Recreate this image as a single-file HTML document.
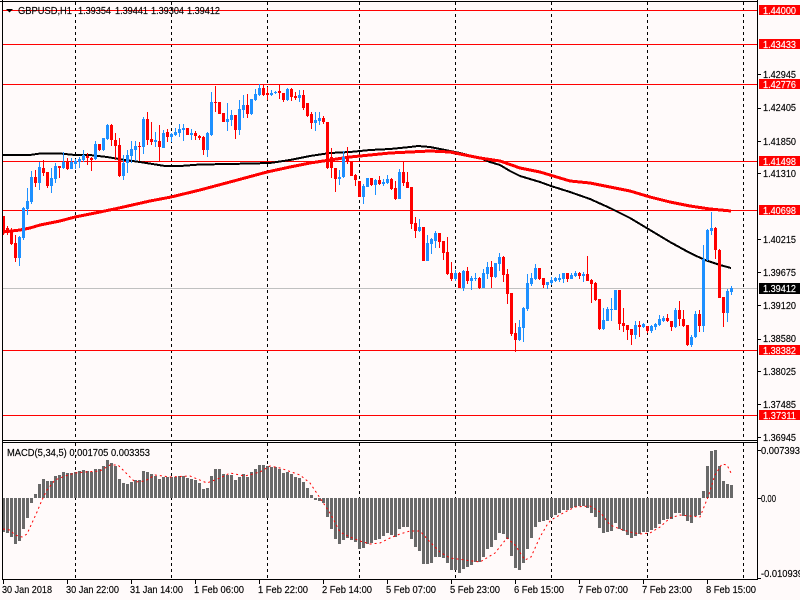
<!DOCTYPE html>
<html>
<head>
<meta charset="utf-8">
<title>GBPUSD,H1</title>
<style>
html,body{margin:0;padding:0;width:800px;height:600px;overflow:hidden;background:#fffafa}
svg{display:block}
text{font-family:"Liberation Sans",sans-serif;font-size:10.5px;fill:#000;stroke:#000;stroke-width:.15px}
</style>
</head>
<body>
<svg width="800" height="600" viewBox="0 0 800 600" xmlns="http://www.w3.org/2000/svg">
<rect width="800" height="600" fill="#fffafa"/>
<g shape-rendering="crispEdges">
<!-- grid -->
<path d="M75.5 2V439M171.5 2V439M267.5 2V439M359.5 2V439M455.5 2V439M551.5 2V439M647.5 2V439M743.5 2V439M75.5 443V579M171.5 443V579M267.5 443V579M359.5 443V579M455.5 443V579M551.5 443V579M647.5 443V579M743.5 443V579" stroke="#000" stroke-width="1" stroke-dasharray="3 3" fill="none"/>
<!-- price level lines -->
<path d="M3 288.5H757" stroke="#c0c0c0" fill="none"/>
<path d="M3 10.5H757M3 44.5H757M3 84.5H757M3 161.5H757M3 210.5H757M3 350.5H757M3 415.5H757" stroke="#ff0000" fill="none"/>
<!-- moving averages -->
<path d="M3 155L30 155L40 153.5L60 153.5L75 155L90 155L107 157L125 160L140 162L165 166L180 166L200 164.5L230 164L250 163.5L270 163L290 160L310 156L330 153L350 152L370 150L390 149L410 147L418 146L430 147L450 151L460 153L480 158L490 162L500 165L510 171L520 176L530 179L540 182L551 186L570 192L590 199L610 208L630 218L650 230L670 242L690 253L705 260L720 265L731 268" stroke="#000" stroke-width="2" fill="none"/>
<path d="M3 232L20 230L30 228L40 225L60 221L75 217L85 215L100 212L119 208L130 205.5L150 201L171 197L200 190L230 182L267 172L290 167L310 163L330 160L350 157L370 155L390 153L410 152L430 151L450 152L460 154L480 158L500 161L520 168L540 172L570 181L590 183L610 187L630 191L650 197L670 202L690 206L710 209L731 211" stroke="#ff0000" stroke-width="3" fill="none"/>
</g>
<g shape-rendering="crispEdges" fill="none">
<!-- blue wicks -->
<path stroke="#1e90ff" stroke-width="1" d="M19.5 236V266M23.5 207V240M27.5 188V215M31.5 171V204M39.5 162V190M51.5 168V193M55.5 163V183M63.5 152V169M71.5 158V169M75.5 159V169M79.5 157V168M83.5 150V162M95.5 141V160M103.5 138V151M107.5 124V140M123.5 155V180M127.5 150V173M131.5 141V163M135.5 141V161M143.5 117V154M155.5 132V147M163.5 130V148M171.5 133V142M175.5 128V136M179.5 124V137M183.5 124V141M191.5 129V140M207.5 132V157M211.5 92V136M227.5 103V131M231.5 110V126M239.5 100V135M243.5 95V118M251.5 99V115M255.5 89V101M259.5 84V96M271.5 90V96M275.5 91V94M287.5 88V101M299.5 90V102M315.5 112V131M319.5 112V125M339.5 170V185M343.5 151V178M363.5 184V204M367.5 178V187M375.5 179V195M383.5 179V186M387.5 175V184M399.5 169V199M419.5 219V232M427.5 235V261M431.5 238V254M435.5 231V248M455.5 270V281M463.5 270V291M471.5 276V290M475.5 273V281M483.5 269V288M487.5 262V279M495.5 263V278M499.5 253V271M519.5 320V341M523.5 307V342M527.5 274V311M531.5 273V286M535.5 264V280M547.5 282V289M551.5 277V285M555.5 277V282M559.5 274V282M563.5 273V283M571.5 273V279M575.5 271V277M583.5 272V282M603.5 308V330M607.5 307V321M611.5 298V321M615.5 290V310M635.5 321V339M643.5 323V328M651.5 325V333M655.5 323V330M659.5 315V326M663.5 316V322M675.5 308V328M691.5 335V347M695.5 311V338M703.5 245V332M707.5 229V261M711.5 212V235M727.5 289V322M731.5 286V295"/>
<!-- blue bodies -->
<path stroke="#1e90ff" stroke-width="3" d="M19.5 237V258M23.5 208V238M27.5 201V209M31.5 177V202M39.5 167V183M51.5 178V186M55.5 166V179M63.5 162V168M71.5 162V169M75.5 161V164M79.5 159V162M83.5 155V160M95.5 144V159M103.5 138V150M107.5 125V139M123.5 163V176M127.5 155V163M131.5 149V156M135.5 146V150M143.5 119V147M155.5 140V142M163.5 133V148M171.5 134V137M175.5 132V135M179.5 129V133M183.5 128V130M191.5 133V135M207.5 133V150M211.5 102V135M227.5 119V122M231.5 115V120M239.5 109V130M243.5 105V110M251.5 99V114M255.5 94V100M259.5 88V95M271.5 93V95M275.5 92V93M287.5 89V100M299.5 95V98M315.5 120V123M319.5 118V121M339.5 177V179M343.5 157V177M363.5 186V197M367.5 178V187M375.5 180V185M383.5 182V184M387.5 179V183M399.5 172V199M419.5 227V231M427.5 243V261M431.5 239V244M435.5 233V241M455.5 273V279M463.5 271V288M471.5 278V281M475.5 278V279M483.5 273V288M487.5 267V274M495.5 263V277M499.5 257V264M519.5 327V340M523.5 308V328M527.5 283V309M531.5 278V284M535.5 268V279M547.5 282V285M551.5 280V283M555.5 278V281M559.5 278V280M563.5 273V279M571.5 275V279M575.5 273V276M583.5 274V276M603.5 320V329M607.5 309V321M611.5 309V310M615.5 290V310M635.5 325V335M643.5 324V327M651.5 326V331M655.5 324V327M659.5 319V325M663.5 318V321M675.5 310V327M691.5 337V345M695.5 314V337M703.5 259V326M707.5 230V260M711.5 228V231M727.5 291V313M731.5 288V292"/>
<!-- red wicks -->
<path stroke="#ff0000" stroke-width="1" d="M3.5 216V235M7.5 226V235M11.5 228V245M15.5 235V262M35.5 170V187M43.5 160V176M47.5 172V188M59.5 166V178M67.5 158V170M87.5 153V165M91.5 157V171M99.5 144V151M111.5 124V146M115.5 133V160M119.5 138V177M139.5 142V161M147.5 112V145M151.5 122V145M159.5 125V162M167.5 129V142M187.5 128V135M195.5 131V140M199.5 135V140M203.5 136V155M215.5 86V112M219.5 102V114M223.5 113V122M235.5 115V139M247.5 94V118M263.5 84V96M267.5 87V100M279.5 85V99M283.5 93V102M291.5 88V101M295.5 92V100M303.5 90V110M307.5 103V117M311.5 112V129M323.5 116V124M327.5 122V169M331.5 148V178M335.5 168V192M347.5 147V164M351.5 162V176M355.5 174V186M359.5 181V197M371.5 178V186M379.5 176V185M391.5 178V190M395.5 181V200M403.5 162V186M407.5 172V188M411.5 187V229M415.5 217V238M423.5 227V261M439.5 233V248M443.5 241V260M447.5 237V275M451.5 262V281M459.5 272V288M467.5 267V284M479.5 277V289M491.5 261V288M503.5 256V282M507.5 269V304M511.5 293V336M515.5 323V352M539.5 268V280M543.5 278V288M567.5 273V282M579.5 272V279M587.5 256V281M591.5 279V303M595.5 282V301M599.5 299V330M619.5 290V330M623.5 308V332M627.5 325V340M631.5 329V345M639.5 321V337M647.5 326V333M667.5 314V322M671.5 321V331M679.5 301V326M683.5 310V327M687.5 325V346M699.5 310V332M715.5 227V259M719.5 249V298M723.5 297V327"/>
<!-- red bodies -->
<path stroke="#ff0000" stroke-width="3" d="M3.5 216V233M7.5 228V233M11.5 230V244M15.5 243V258M35.5 177V183M43.5 168V173M47.5 172V186M59.5 166V168M67.5 162V169M87.5 156V158M91.5 158V160M99.5 144V150M111.5 125V140M115.5 140V146M119.5 145V176M139.5 146V147M147.5 119V140M151.5 139V142M159.5 141V147M167.5 132V137M187.5 128V135M195.5 133V136M199.5 136V138M203.5 137V150M215.5 102V103M219.5 102V114M223.5 113V122M235.5 115V130M247.5 105V114M263.5 88V95M267.5 93V95M279.5 91V93M283.5 93V100M291.5 89V97M295.5 96V98M303.5 95V108M307.5 103V116M311.5 114V123M323.5 118V122M327.5 122V168M331.5 157V168M335.5 168V179M347.5 156V162M351.5 162V176M355.5 175V180M359.5 181V197M371.5 178V185M379.5 180V184M391.5 179V189M395.5 188V199M403.5 172V183M407.5 182V188M411.5 187V224M415.5 223V231M423.5 227V261M439.5 233V242M443.5 241V253M447.5 252V274M451.5 273V279M459.5 273V288M467.5 271V281M479.5 278V288M491.5 267V277M503.5 257V275M507.5 274V294M511.5 293V334M515.5 333V340M539.5 268V279M543.5 278V285M567.5 273V279M579.5 273V276M587.5 274V281M591.5 280V284M595.5 283V300M599.5 299V329M619.5 290V324M623.5 323V326M627.5 325V330M631.5 329V335M639.5 325V327M647.5 326V331M667.5 318V321M671.5 321V327M679.5 310V319M683.5 319V326M687.5 325V345M699.5 314V326M715.5 228V250M719.5 250V298M723.5 297V313"/>
<!-- MACD histogram -->
<path stroke="#696969" stroke-width="3" d="M3.5 498V532M7.5 498V533M11.5 498V537M15.5 498V544M19.5 498V541M23.5 498V529M27.5 498V518M31.5 498V503M35.5 498V494M39.5 498V484M43.5 498V479M47.5 498V481M51.5 498V481M55.5 498V476M59.5 498V475M63.5 498V472M67.5 498V473M71.5 498V473M75.5 498V472M79.5 498V471M83.5 498V470M87.5 498V471M91.5 498V472M95.5 498V469M99.5 498V469M103.5 498V466M107.5 498V460M111.5 498V463M115.5 498V466M119.5 498V479M123.5 498V483M127.5 498V484M131.5 498V482M135.5 498V480M139.5 498V480M143.5 498V471M147.5 498V472M151.5 498V474M155.5 498V476M159.5 498V479M163.5 498V477M167.5 498V477M171.5 498V477M175.5 498V477M179.5 498V476M183.5 498V476M187.5 498V478M191.5 498V479M195.5 498V480M199.5 498V483M203.5 498V489M207.5 498V488M211.5 498V476M215.5 498V469M219.5 498V469M223.5 498V474M227.5 498V475M231.5 498V475M235.5 498V480M239.5 498V477M243.5 498V474M247.5 498V477M251.5 498V472M255.5 498V469M259.5 498V465M263.5 498V465M267.5 498V466M271.5 498V467M275.5 498V467M279.5 498V469M283.5 498V473M287.5 498V472M291.5 498V474M295.5 498V477M299.5 498V478M303.5 498V482M307.5 498V488M311.5 498V495M315.5 498V500M319.5 498V501M323.5 498V503M327.5 498V517M331.5 498V529M335.5 498V539M339.5 498V544M343.5 498V540M347.5 498V538M351.5 498V540M355.5 498V542M359.5 498V549M363.5 498V548M367.5 498V544M371.5 498V543M375.5 498V540M379.5 498V539M383.5 498V536M387.5 498V533M391.5 498V535M395.5 498V537M399.5 498V529M403.5 498V527M407.5 498V527M411.5 498V539M415.5 498V547M419.5 498V551M423.5 498V564M427.5 498V564M431.5 498V563M435.5 498V557M439.5 498V557M443.5 498V558M447.5 498V563M451.5 498V570M455.5 498V570M459.5 498V573M463.5 498V569M467.5 498V567M471.5 498V565M475.5 498V562M479.5 498V562M483.5 498V557M487.5 498V549M491.5 498V547M495.5 498V540M499.5 498V533M503.5 498V534M507.5 498V539M511.5 498V556M515.5 498V568M519.5 498V570M523.5 498V563M527.5 498V549M531.5 498V538M535.5 498V527M539.5 498V522M543.5 498V521M547.5 498V520M551.5 498V517M555.5 498V515M559.5 498V513M563.5 498V510M567.5 498V510M571.5 498V508M575.5 498V507M579.5 498V506M583.5 498V506M587.5 498V508M591.5 498V513M595.5 498V517M599.5 498V528M603.5 498V533M607.5 498V532M611.5 498V531M615.5 498V523M619.5 498V529M623.5 498V531M627.5 498V535M631.5 498V538M635.5 498V536M639.5 498V534M643.5 498V532M647.5 498V532M651.5 498V530M655.5 498V528M659.5 498V524M663.5 498V520M667.5 498V519M671.5 498V519M675.5 498V513M679.5 498V513M683.5 498V516M687.5 498V521M691.5 498V523M695.5 498V516M699.5 498V515M703.5 498V491M707.5 498V466M711.5 498V451M715.5 498V450M719.5 498V466M723.5 498V481M727.5 498V484M731.5 498V485"/>
</g>
<!-- MACD signal -->
<path d="M3 529L10 530L15 535L22 537L27 534L32 523L37 512L42 500L47 490L55 480L65 476L75 473L85 472L100 471L110 465L118 465L125 472L135 482L145 481L155 475L170 477L190 476L207 483L220 478L230 473L245 476L260 472L270 466L280 468L300 475L310 483L320 498L330 513L340 532L350 537L360 541L370 544L380 543L390 538L400 534L410 531L420 531L430 542L440 552L450 558L465 560L480 562L495 553L507 538L515 545L525 560L531 557L540 537L547 525L551 520L565 512L575 507L590 506L600 512L610 525L620 529L630 532L640 534L650 533L660 527L670 518L680 515L690 516L700 517L708 497L715 475L722 464L727 465L731 473" stroke="#ff0000" stroke-width="1" stroke-dasharray="2 3" fill="none"/>
<g shape-rendering="crispEdges">
<!-- frame -->
<path d="M2.5 0V580M0 1.5H758M757.5 0V580M2 440.5H758M2 442.5H758M2 579.5H758" stroke="#000" stroke-width="1" fill="none"/>
<!-- axis ticks -->
<path d="M758 74.5H761M758 108.5H761M758 141.5H761M758 173.5H761M758 239.5H761M758 272.5H761M758 305.5H761M758 339.5H761M758 371.5H761M758 404.5H761M758 437.5H761M758 450.5H761M758 498.5H761M758 578.5H761M3.5 580V584M67.5 580V584M131.5 580V584M195.5 580V584M259.5 580V584M323.5 580V584M387.5 580V584M451.5 580V584M515.5 580V584M579.5 580V584M643.5 580V584M707.5 580V584" stroke="#000" stroke-width="1" fill="none"/>
<!-- price boxes -->
<rect x="759" y="5" width="41" height="10" fill="#ff0000"/>
<rect x="759" y="39" width="41" height="10" fill="#ff0000"/>
<rect x="759" y="79" width="41" height="10" fill="#ff0000"/>
<rect x="759" y="156" width="41" height="10" fill="#ff0000"/>
<rect x="759" y="205" width="41" height="10" fill="#ff0000"/>
<rect x="759" y="345" width="41" height="10" fill="#ff0000"/>
<rect x="759" y="410" width="41" height="10" fill="#ff0000"/>
<rect x="759" y="283" width="41" height="11" fill="#000"/>
</g>
<!-- header -->
<path d="M6 9H13L9.5 12.5Z" fill="#000"/>
<text x="18" y="14" textLength="54" lengthAdjust="spacingAndGlyphs">GBPUSD,H1</text>
<text x="78" y="14" textLength="33" lengthAdjust="spacingAndGlyphs">1.39354</text>
<text x="115" y="14" textLength="33" lengthAdjust="spacingAndGlyphs">1.39441</text>
<text x="151" y="14" textLength="33" lengthAdjust="spacingAndGlyphs">1.39304</text>
<text x="187" y="14" textLength="33" lengthAdjust="spacingAndGlyphs">1.39412</text>
<text x="7" y="456" textLength="143" lengthAdjust="spacingAndGlyphs">MACD(5,34,5) 0.001705 0.003353</text>
<!-- axis labels -->
<g>
<text x="763" y="78" textLength="33" lengthAdjust="spacingAndGlyphs">1.42945</text>
<text x="763" y="111" textLength="33" lengthAdjust="spacingAndGlyphs">1.42405</text>
<text x="763" y="145" textLength="33" lengthAdjust="spacingAndGlyphs">1.41850</text>
<text x="763" y="177" textLength="33" lengthAdjust="spacingAndGlyphs">1.41310</text>
<text x="763" y="243" textLength="33" lengthAdjust="spacingAndGlyphs">1.40215</text>
<text x="763" y="276" textLength="33" lengthAdjust="spacingAndGlyphs">1.39675</text>
<text x="763" y="309" textLength="33" lengthAdjust="spacingAndGlyphs">1.39120</text>
<text x="763" y="342" textLength="33" lengthAdjust="spacingAndGlyphs">1.38580</text>
<text x="763" y="375" textLength="33" lengthAdjust="spacingAndGlyphs">1.38025</text>
<text x="763" y="408" textLength="33" lengthAdjust="spacingAndGlyphs">1.37485</text>
<text x="763" y="441" textLength="33" lengthAdjust="spacingAndGlyphs">1.36945</text>
<text x="761" y="454" textLength="39" lengthAdjust="spacingAndGlyphs">0.007393</text>
<text x="761" y="502" textLength="15" lengthAdjust="spacingAndGlyphs">0.00</text>
<text x="761" y="577" textLength="42" lengthAdjust="spacingAndGlyphs">-0.010939</text>
</g>
<g>
<text style="fill:#fff;stroke:#fff" x="763" y="14" textLength="33" lengthAdjust="spacingAndGlyphs">1.44000</text>
<text style="fill:#fff;stroke:#fff" x="763" y="48" textLength="33" lengthAdjust="spacingAndGlyphs">1.43433</text>
<text style="fill:#fff;stroke:#fff" x="763" y="88" textLength="33" lengthAdjust="spacingAndGlyphs">1.42776</text>
<text style="fill:#fff;stroke:#fff" x="763" y="165" textLength="33" lengthAdjust="spacingAndGlyphs">1.41498</text>
<text style="fill:#fff;stroke:#fff" x="763" y="214" textLength="33" lengthAdjust="spacingAndGlyphs">1.40698</text>
<text style="fill:#fff;stroke:#fff" x="763" y="292" textLength="33" lengthAdjust="spacingAndGlyphs">1.39412</text>
<text style="fill:#fff;stroke:#fff" x="763" y="354" textLength="33" lengthAdjust="spacingAndGlyphs">1.38382</text>
<text style="fill:#fff;stroke:#fff" x="763" y="419" textLength="33" lengthAdjust="spacingAndGlyphs">1.37311</text>
</g>
<g>
<text x="2" y="593" textLength="50" lengthAdjust="spacingAndGlyphs">30 Jan 2018</text>
<text x="66" y="593" textLength="53" lengthAdjust="spacingAndGlyphs">30 Jan 22:00</text>
<text x="130" y="593" textLength="53" lengthAdjust="spacingAndGlyphs">31 Jan 14:00</text>
<text x="194" y="593" textLength="50" lengthAdjust="spacingAndGlyphs">1 Feb 06:00</text>
<text x="258" y="593" textLength="50" lengthAdjust="spacingAndGlyphs">1 Feb 22:00</text>
<text x="322" y="593" textLength="50" lengthAdjust="spacingAndGlyphs">2 Feb 14:00</text>
<text x="386" y="593" textLength="50" lengthAdjust="spacingAndGlyphs">5 Feb 07:00</text>
<text x="450" y="593" textLength="50" lengthAdjust="spacingAndGlyphs">5 Feb 23:00</text>
<text x="514" y="593" textLength="50" lengthAdjust="spacingAndGlyphs">6 Feb 15:00</text>
<text x="578" y="593" textLength="50" lengthAdjust="spacingAndGlyphs">7 Feb 07:00</text>
<text x="642" y="593" textLength="50" lengthAdjust="spacingAndGlyphs">7 Feb 23:00</text>
<text x="706" y="593" textLength="50" lengthAdjust="spacingAndGlyphs">8 Feb 15:00</text>
</g>
</svg>
</body>
</html>
